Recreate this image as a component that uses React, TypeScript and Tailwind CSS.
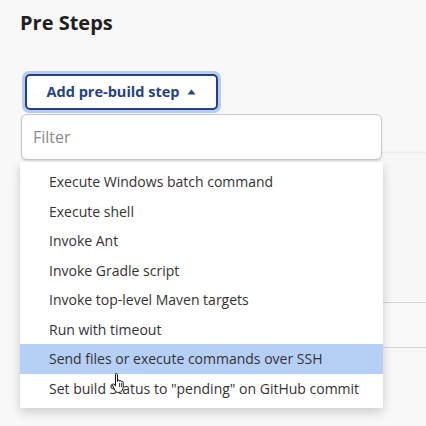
import React from "react";

const items = [
  "Execute Windows batch command",
  "Execute shell",
  "Invoke Ant",
  "Invoke Gradle script",
  "Invoke top-level Maven targets",
  "Run with timeout",
  "Send files or execute commands over SSH",
  'Set build Status to "pending" on GitHub commit',
];

function HandCursor() {
  return (
    <svg width="18" height="22" viewBox="0 0 18 22" className="absolute left-[111px] top-[372px]">
      <path
        d="M5 1.5c.9 0 1.5.6 1.5 1.5v6.5l.2-.9c.2-.8 1.6-.8 1.8.1v.6c.2-.9 1.7-.9 1.9 0v.7c.3-.8 1.7-.7 1.8.2v4.8c0 2.7-1.7 5.5-4.6 5.5H7.5c-1.6 0-2.6-.8-3.4-2L1.3 13.2c-.5-.9.6-1.8 1.4-1.1l1.8 1.7V3c0-.9-.4-1.5.5-1.5z"
        fill="#fff"
        stroke="#111"
        strokeWidth="1"
        strokeLinejoin="round"
      />
      <path d="M8.5 11v4M10.4 11v4" stroke="#111" strokeWidth="0.8" />
    </svg>
  );
}

export default function App() {
  return (
    <div className="relative w-[426px] h-[426px] overflow-hidden bg-[#f8f8f8] text-[#222] font-['Segoe_UI','Open_Sans','Noto_Sans',sans-serif]">
      <div className="pl-[20px] pt-[8px]">
        <h2 className="text-[20px] font-bold leading-[30px] text-[#1f1f1f]">Pre Steps</h2>
        <div className="mt-[33px] ml-[2px] w-[199px] rounded-[7px] bg-[#b8cdee] p-[3px]">
          <button className="flex h-[36px] w-full items-center justify-center gap-[8px] rounded-[5px] border-2 border-[#233f8f] bg-white text-[14.5px] font-bold text-[#22428f]">
            <span>Add pre-build step</span>
            <svg width="9" height="6" viewBox="0 0 9 6">
              <path d="M4.5 0.5 L8.5 5.5 L0.5 5.5 Z" fill="#22428f" />
            </svg>
          </button>
        </div>
      </div>
      {/* background content behind the dropdown */}
      <div className="mt-[39px] ml-[30px] h-[200px] border-t border-[#ececec] bg-[#f7f7f7] shadow-[0_-1px_2px_rgba(0,0,0,0.03)]">
        <div className="mt-[149px] h-[46px] border-y border-[#d4d4d4] bg-[#f9f9f9]" />
      </div>

      {/* dropdown overlay */}
      <div className="absolute left-[20px] top-[114px] w-[363px]">
        <div className="mx-[1px] flex h-[46px] items-center rounded-[6px] border border-[#c8c8c8] bg-white px-[11px] text-[16px] text-[#8a8a8a] shadow-[0_1px_2px_rgba(0,0,0,0.12)]">
          Filter
        </div>
        <div className="mt-[2px] bg-white py-[5px] shadow-[0_4px_10px_rgba(0,0,0,0.18)]">
          {items.map((t, i) => (
            <div
              key={t}
              className={
                "flex h-[29.5px] items-center pl-[29px] text-[14px] text-[#333] " +
                (i === 6 ? "bg-[#b6cff5]" : "")
              }
            >
              {t}
            </div>
          ))}
        </div>
      </div>
      <HandCursor />
    </div>
  );
}
